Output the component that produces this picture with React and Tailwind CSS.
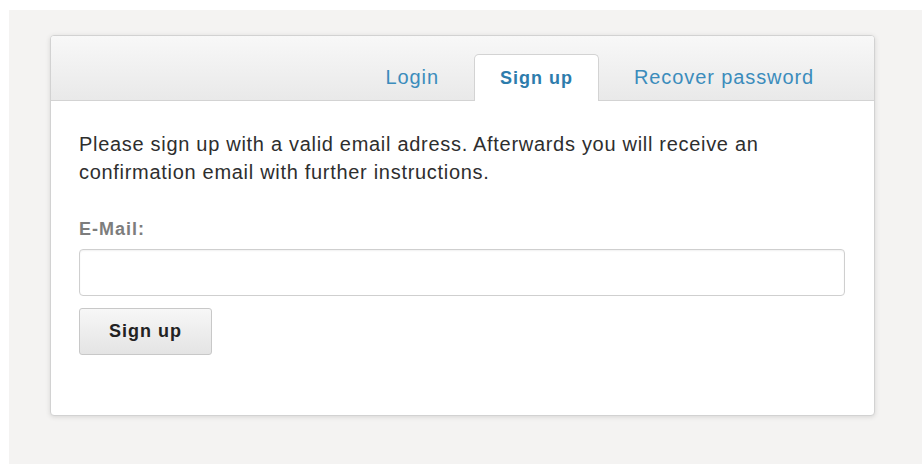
import React, { useState } from 'react';

const font = { fontFamily: '"Liberation Sans", Arial, sans-serif' };

// Tab labels shown in the card header
const TABS = ['Login', 'Sign up', 'Recover password'];

const Tab = ({ label, active, onClick }) => (
  <button
    type="button"
    onClick={onClick}
    className={
      active
        ? 'relative -mb-px h-[47px] rounded-t-[5px] border border-b-0 border-[#d3d3d3] bg-white px-[25px] text-[18px] font-bold tracking-[1px] text-[#2d7cac]'
        : 'h-[47px] px-[26px] text-[20px] tracking-[0.9px] text-[#3b8cbc]'
    }
  >
    {label}
  </button>
);

const SignupForm = () => (
  <div className="pl-[28px] pr-[29px] pt-[29px] pb-[60px]">
    <p className="text-[20px] leading-[28px] tracking-[0.7px] text-[#2e2e2e]">
      Please sign up with a valid email adress. Afterwards you will receive an
      <br />
      confirmation email with further instructions.
    </p>
    <label className="mt-[29px] block text-[18px] font-bold leading-[28px] tracking-[1px] text-[#7d7d7d]">
      E-Mail:
    </label>
    <input
      type="email"
      className="mt-[6px] block h-[47px] w-full rounded-[4px] border border-[#cfcfcf] px-3 text-[18px] shadow-[inset_0_1px_2px_rgba(0,0,0,0.06)] outline-none"
    />
    <button
      type="button"
      className="mt-[12px] block h-[47px] w-[133px] rounded-[3px] border border-[#c8c8c8] bg-gradient-to-b from-[#f7f7f7] to-[#e4e4e4] text-[18px] font-bold tracking-[1px] text-[#222]"
    >
      Sign up
    </button>
  </div>
);

const App = () => {
  const [tab, setTab] = useState('Sign up');

  return (
    <div className="min-h-screen bg-white pl-[9px] pt-[10px]" style={font}>
      <div className="min-h-[454px] bg-[#f4f3f2] pl-[41px] pt-[25px] pb-[48px]">
        <div className="w-[825px] overflow-hidden rounded-[4px] border border-[#d2d2d2] bg-white shadow-[0_1px_5px_rgba(0,0,0,0.12)]">
          <div className="flex h-[65px] items-end justify-end gap-[9px] border-b border-[#d3d3d3] bg-gradient-to-b from-[#f8f8f8] to-[#e9e9e9] pr-[34px]">
            {TABS.map((t) => (
              <Tab key={t} label={t} active={t === tab} onClick={() => setTab(t)} />
            ))}
          </div>
          <SignupForm />
        </div>
      </div>
    </div>
  );
};

export default App;
